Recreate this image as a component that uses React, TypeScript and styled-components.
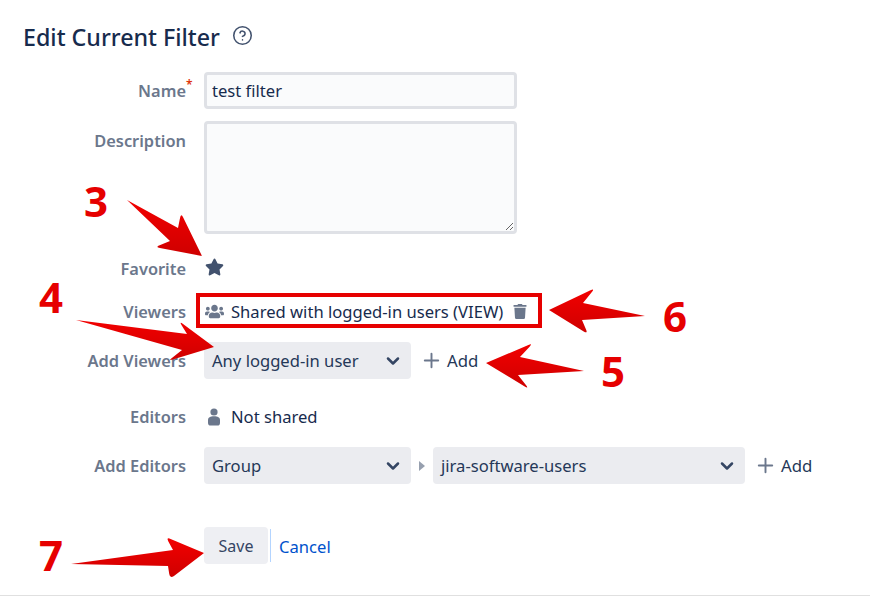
import React from "react";
import styled, { createGlobalStyle } from "styled-components";
import { CircleHelp, ChevronDown, Plus } from "lucide-react";
import { FaStar, FaUsers, FaTrash } from "react-icons/fa";

const GlobalStyle = createGlobalStyle`
  html, body {
    margin: 0;
    padding: 0;
    background: #fff;
  }
  body {
    font-family: "Noto Sans", "Open Sans", sans-serif;
    color: #172b4d;
  }
`;

const Page = styled.div`
  position: relative;
  width: 870px;
  height: 596px;
  box-sizing: border-box;
  overflow: hidden;
  border-bottom: 1px solid #e0e0e0;
  padding-top: 20px;
`;

const TitleBar = styled.div`
  display: flex;
  align-items: center;
  gap: 12px;
  height: 34px;
  padding-left: 23px;
  margin-bottom: 18px;
`;

const Title = styled.h1`
  margin: 0;
  font-size: 23.25px;
  font-weight: 500;
  line-height: 34px;
  color: #172b4d;
`;

const HelpIcon = styled(CircleHelp)`
  width: 21px;
  height: 21px;
  color: #42526e;
  margin-top: -4px;
`;

const Row = styled.div<{ $mt?: number }>`
  display: flex;
  align-items: center;
  min-height: 37px;
  margin-top: ${(p) => p.$mt ?? 0}px;
`;

const Label = styled.label<{ $top?: boolean }>`
  flex: 0 0 186px;
  margin-right: 18px;
  text-align: right;
  font-size: 16.4px;
  font-weight: 600;
  color: #6b778c;
  align-self: ${(p) => (p.$top ? "flex-start" : "center")};
  padding-top: ${(p) => (p.$top ? "8px" : "0")};
`;

const Required = styled.sup`
  position: absolute;
  font-size: 12px;
  line-height: 14px;
  color: #de350b;
  margin-top: -1px;
`;

const TextInput = styled.input`
  width: 313px;
  height: 37px;
  box-sizing: border-box;
  border: 3px solid #dfe1e6;
  border-radius: 4px;
  background: #fafbfc;
  padding: 0 5px;
  font: inherit;
  font-size: 16.6px;
  color: #172b4d;
  outline: none;
`;

const TextArea = styled.textarea`
  display: block;
  width: 313px;
  height: 113px;
  box-sizing: border-box;
  border: 3px solid #dfe1e6;
  border-radius: 4px;
  background: #fafbfc;
  padding: 5px;
  margin: 0;
  outline: none;
`;

const FavoriteIcon = styled(FaStar)`
  width: 19px;
  height: 18px;
  color: #42526e;
  margin: -4px 0 0 1px;
`;

const ShareText = styled.span`
  display: flex;
  align-items: center;
  font-size: 16.6px;
  color: #172b4d;
`;

const UsersIcon = styled(FaUsers)`
  width: 19px;
  height: 17px;
  color: #6b778c;
  margin: 0 7px 0 1px;
`;

const TrashIcon = styled(FaTrash)`
  width: 14px;
  height: 15px;
  color: #6b778c;
  margin-left: 10px;
`;

const UserGlyph = styled.svg`
  width: 14px;
  height: 18px;
  color: #6b778c;
  margin: 0 10px 0 3px;
`;

const Select = styled.div<{ $width: number }>`
  display: flex;
  align-items: center;
  justify-content: space-between;
  width: ${(p) => p.$width}px;
  height: 37px;
  box-sizing: border-box;
  padding: 0 8px;
  border-radius: 4px;
  background: #ebecf0;
  font-size: 16.6px;
  color: #253858;
`;

const Chevron = styled(ChevronDown)`
  width: 20px;
  height: 20px;
  color: #344563;
`;

const Caret = styled.span`
  width: 0;
  height: 0;
  margin: 0 8px 0 8px;
  border-top: 5px solid transparent;
  border-bottom: 5px solid transparent;
  border-left: 6px solid #97a0af;
`;

const AddButton = styled.span`
  display: flex;
  align-items: center;
  margin-left: 9px;
  font-size: 16.8px;
  color: #253858;
`;

const PlusIcon = styled(Plus)`
  width: 23px;
  height: 23px;
  color: #6b778c;
  margin-right: 4px;
`;

const SaveButton = styled.button`
  width: 64px;
  height: 37px;
  border: 0;
  border-radius: 4px;
  background: #eeeff3;
  font: inherit;
  font-size: 16px;
  line-height: 39px;
  color: #344563;
  padding: 0;
`;

const Divider = styled.span`
  width: 1px;
  height: 33px;
  margin: 0 8px 0 2px;
  background: #b3d4ff;
`;

const CancelLink = styled.a`
  font-size: 16.6px;
  line-height: 25px;
  padding-top: 2px;
  color: #0052cc;
  text-decoration: none;
`;

const HighlightBox = styled.div`
  position: absolute;
  left: 196px;
  top: 293px;
  width: 346px;
  height: 35px;
  box-sizing: border-box;
  border: 4px solid #e60000;
  pointer-events: none;
`;

const Callout = styled.span<{ $x: number; $y: number }>`
  position: absolute;
  left: ${(p) => p.$x}px;
  top: ${(p) => p.$y}px;
  font-size: 42px;
  font-weight: 700;
  line-height: 42px;
  color: #e60000;
`;

const ArrowLayer = styled.svg`
  position: absolute;
  left: 0;
  top: 0;
  width: 870px;
  height: 596px;
  pointer-events: none;
`;

type Pt = [number, number];

// points: tail, notch, barb, tip, barb, notch
const arrowPath = (tail: Pt, n1: Pt, b1: Pt, tip: Pt, b2: Pt, n2: Pt) => {
  const toward = (a: Pt, b: Pt, d: number) => {
    const len = Math.hypot(b[0] - a[0], b[1] - a[1]);
    return `${a[0] + ((b[0] - a[0]) * d) / len} ${a[1] + ((b[1] - a[1]) * d) / len}`;
  };
  return [
    `M${tail.join(" ")}`,
    `L${n1.join(" ")}`,
    `L${toward(b1, n1, 5)}`,
    `Q${b1.join(" ")} ${toward(b1, tip, 5)}`,
    `L${tip.join(" ")}`,
    `L${toward(b2, tip, 5)}`,
    `Q${b2.join(" ")} ${toward(b2, n2, 5)}`,
    `L${n2.join(" ")}`,
    "Z",
  ].join(" ");
};

const arrows: [Pt, Pt, Pt, Pt, Pt, Pt][] = [
  [[127, 200], [178, 228], [181, 213], [202, 256], [155, 247], [170, 241]],
  [[76, 320], [187, 334], [179, 321], [214, 347], [168, 361], [182, 350]],
  [[645, 316], [583, 303], [595, 288], [549, 310], [588, 334], [582, 320]],
  [[584, 371], [520, 357], [533, 343], [486, 363], [529, 389], [518, 375]],
  [[71, 564], [173, 550], [166, 537], [204, 553], [170, 579], [168, 566]],
];

const Annotations = () => (
  <>
    <HighlightBox />
    <ArrowLayer viewBox="0 0 870 596">
      <defs>
        <linearGradient id="arrowRed" x1="0" y1="0" x2="0" y2="1">
          <stop offset="0" stopColor="#f20000" />
          <stop offset="1" stopColor="#cf0000" />
        </linearGradient>
      </defs>
      {arrows.map((a, i) => (
        <path key={i} d={arrowPath(...a)} fill="url(#arrowRed)" />
      ))}
    </ArrowLayer>
    <Callout $x={84} $y={180}>3</Callout>
    <Callout $x={39} $y={276}>4</Callout>
    <Callout $x={601} $y={350}>5</Callout>
    <Callout $x={663} $y={295}>6</Callout>
    <Callout $x={39} $y={534}>7</Callout>
  </>
);

export default function App() {
  return (
    <Page>
      <GlobalStyle />
      <TitleBar>
        <Title>Edit Current Filter</Title>
        <HelpIcon strokeWidth={1.75} />
      </TitleBar>

      <Row>
        <Label>
          Name<Required>*</Required>
        </Label>
        <TextInput value="test filter" readOnly />
      </Row>
      <Row $mt={12}>
        <Label $top>Description</Label>
        <TextArea readOnly />
      </Row>
      <Row $mt={16}>
        <Label>Favorite</Label>
        <FavoriteIcon />
      </Row>
      <Row $mt={6}>
        <Label>Viewers</Label>
        <ShareText>
          <UsersIcon />
          Shared with logged-in users (VIEW)
          <TrashIcon />
        </ShareText>
      </Row>
      <Row $mt={12}>
        <Label>Add Viewers</Label>
        <Select $width={207}>
          Any logged-in user
          <Chevron strokeWidth={3} />
        </Select>
        <AddButton>
          <PlusIcon strokeWidth={2} />
          Add
        </AddButton>
      </Row>
      <Row $mt={19}>
        <Label>Editors</Label>
        <ShareText>
          <UserGlyph viewBox="0 0 14 18" fill="currentColor">
            <circle cx="7" cy="4" r="3.6" />
            <path d="M1 12c0-2.6 2.2-3.8 6-3.8s6 1.2 6 3.8v3c0 1.7-1 2.6-2.6 2.6H3.6C2 17.6 1 16.7 1 15z" />
          </UserGlyph>
          Not shared
        </ShareText>
      </Row>
      <Row $mt={12}>
        <Label>Add Editors</Label>
        <Select $width={207}>
          Group
          <Chevron strokeWidth={3} />
        </Select>
        <Caret />
        <Select $width={312}>
          jira-software-users
          <Chevron strokeWidth={3} />
        </Select>
        <AddButton>
          <PlusIcon strokeWidth={2} />
          Add
        </AddButton>
      </Row>
      <Row $mt={43}>
        <Label />
        <SaveButton>Save</SaveButton>
        <Divider />
        <CancelLink href="#">Cancel</CancelLink>
      </Row>

      <Annotations />
    </Page>
  );
}
